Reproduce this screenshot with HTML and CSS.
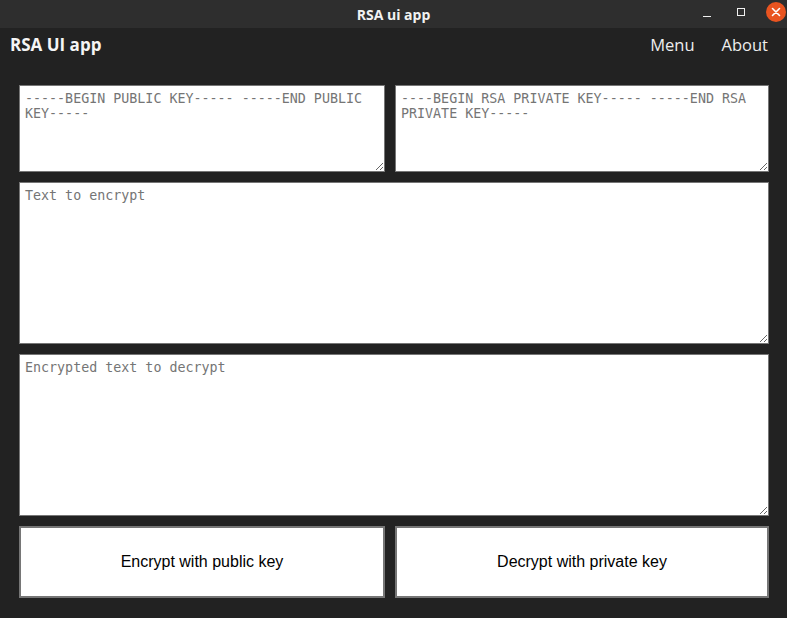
FILE: index.html
```html
<!DOCTYPE html>
<html lang="en">
<head>
<meta charset="utf-8">
<title>RSA ui app</title>
<link rel="stylesheet" href="styles.css">
</head>
<body>
<div class="titlebar">
  <span class="title">RSA ui app</span>
  <div class="controls">
    <span class="ctl-min"></span>
    <span class="ctl-max"></span>
    <span class="ctl-close">
      <svg width="20" height="20" viewBox="0 0 20 20"><path d="M6.5 6.5 L13.5 13.5 M13.5 6.5 L6.5 13.5" stroke="#fff" stroke-width="1.6" stroke-linecap="round"/></svg>
    </span>
  </div>
</div>
<header class="appbar">
  <span class="brand">RSA UI app</span>
  <nav class="nav">
    <span class="nav-item">Menu</span>
    <span class="nav-item">About</span>
  </nav>
</header>
<main class="grid">
  <textarea class="field" placeholder="-----BEGIN PUBLIC KEY----- -----END PUBLIC KEY-----"></textarea>
  <textarea class="field" placeholder="----BEGIN RSA PRIVATE KEY----- -----END RSA PRIVATE KEY-----"></textarea>
  <textarea class="field wide" placeholder="Text to encrypt"></textarea>
  <textarea class="field wide" placeholder="Encrypted text to decrypt"></textarea>
  <button class="btn">Encrypt with public key</button>
  <button class="btn">Decrypt with private key</button>
</main>
</body>
</html>
```
FILE: styles.css
```css
html, body {
  margin: 0;
  padding: 0;
  background: #222222;
  height: 100%;
}
body {
  font-family: "Open Sans", "DejaVu Sans", sans-serif;
  overflow: hidden;
}
.titlebar {
  height: 28px;
  background: #2e2e2e;
  display: flex;
  align-items: center;
  justify-content: center;
  position: relative;
}
.title {
  color: #f2f2f2;
  font-weight: 700;
  font-size: 14px;
}
.controls {
  position: absolute;
  right: 0;
  top: 0;
  height: 28px;
  display: flex;
  align-items: center;
}
.ctl-min {
  width: 8px;
  height: 1px;
  background: #f0f0f0;
  margin-right: 26px;
  margin-top: 5px;
}
.ctl-max {
  width: 6px;
  height: 6px;
  border: 1px solid #f0f0f0;
  margin-right: 21px;
  margin-top: -4px;
}
.ctl-close {
  width: 20px;
  height: 20px;
  border-radius: 50%;
  background: #e95420;
  margin-right: 1px;
  margin-top: -4px;
  display: flex;
}
.appbar {
  box-sizing: border-box;
  height: 34px;
  display: flex;
  align-items: center;
  justify-content: space-between;
  padding: 0 19px 2px 10px;
}
.brand {
  color: #f5f5f5;
  font-weight: 700;
  font-size: 17px;
}
.nav {
  display: flex;
  gap: 27px;
}
.nav-item {
  color: #eeeeee;
  font-size: 16.5px;
}
.grid {
  display: grid;
  grid-template-columns: 366px 374px;
  grid-template-rows: 87px 162px 162px 72px;
  gap: 10px;
  padding: 23px 18px 0 19px;
}
.field {
  box-sizing: border-box;
  margin: 0;
  width: 100%;
  height: 100%;
  border: 1px solid #767676;
  padding: 5px 5px 4px;
  background: #ffffff;
  font-family: "DejaVu Sans Mono", monospace;
  font-size: 13.333px;
  color: #000;
}
.field::placeholder {
  color: #757575;
}
.wide {
  grid-column: 1 / span 2;
}
.btn {
  box-sizing: border-box;
  margin: 0;
  background: #ffffff;
  border: 2px solid #767676;
  font-family: "Liberation Sans", Arial, sans-serif;
  font-size: 16px;
  color: #000;
}
```
